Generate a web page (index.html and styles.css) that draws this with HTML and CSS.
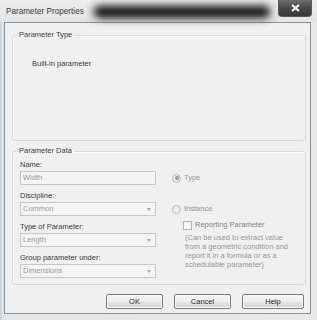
FILE: index.html
```html
<!DOCTYPE html>
<html lang="en">
<head>
    <meta charset="UTF-8">
    <title>Parameter Properties</title>
    <link rel="stylesheet" href="styles.css">
</head>
<body>
    <div class="window">
        <div class="titlebar">
            <span class="title">Parameter Properties</span>
            <div class="redact"></div>
            <div class="close">
                <svg width="9" height="8" viewBox="0 0 9 8"><path d="M1 1 L8 7 M8 1 L1 7" stroke="#fff" stroke-width="2"/></svg>
            </div>
        </div>
        <div class="client">
            <fieldset class="group group-type">
                <legend>Parameter Type</legend>
                <p class="builtin">Built-in parameter</p>
            </fieldset>
            <fieldset class="group group-data">
                <legend>Parameter Data</legend>
                <div class="data-cols">
                    <div class="fields">
                        <label>Name:</label>
                        <div class="field">Width</div>
                        <label>Discipline:</label>
                        <div class="field select">Common</div>
                        <label>Type of Parameter:</label>
                        <div class="field select">Length</div>
                        <label>Group parameter under:</label>
                        <div class="field select">Dimensions</div>
                    </div>
                    <div class="options">
                        <div class="opt-row type-row"><span class="radio checked"></span>Type</div>
                        <div class="opt-row instance-row"><span class="radio"></span>Instance</div>
                        <div class="opt-row check-row"><span class="check"></span>Reporting Parameter</div>
                        <p class="hint">(Can be used to extract value<br>from a geometric condition and<br>report it in a formula or as a<br>schedulable parameter)</p>
                    </div>
                </div>
            </fieldset>
            <div class="buttons">
                <button class="btn">OK</button>
                <button class="btn">Cancel</button>
                <button class="btn btn-help">Help</button>
            </div>
        </div>
    </div>
</body>
</html>
```

FILE: styles.css
```css
body {
    margin: 0;
    background-color: #dfe3e7;
    font-family: "Liberation Sans", Arial, sans-serif;
    font-size: 7.5px;
    color: #3a3a3a;
}
.window {
    width: 317px;
    height: 320px;
    display: flex;
    flex-direction: column;
    background: linear-gradient(to right, #c9d3dc 0, #e4e7ea 4px, #e6e8ea 100%);
}
.titlebar {
    height: 22px;
    flex: none;
    position: relative;
    background: linear-gradient(to bottom, #ececec, #e2e5e8);
}
.title {
    position: absolute;
    left: 6px;
    top: 7px;
    font-size: 8.2px;
    line-height: 10px;
    color: #3a3a3a;
}
.redact {
    position: absolute;
    left: 94px;
    top: 6px;
    width: 176px;
    height: 12px;
    background: #080808;
    filter: blur(4px);
    border-radius: 5px;
}
.close {
    position: absolute;
    left: 278px;
    top: 0;
    width: 34px;
    height: 17px;
    background: linear-gradient(to bottom, #6e6e6e, #464646 55%, #383838);
    border: 1px solid #5a5a5a;
    border-top: none;
    border-radius: 0 0 4px 4px;
    box-sizing: border-box;
    display: flex;
    justify-content: center;
    align-items: center;
}
.client {
    flex: 1;
    margin: 0 6px 6px 4px;
    border: 1px solid #8e8f91;
    background-color: #f0f0f0;
    display: flex;
    flex-direction: column;
}
.group {
    margin: 0 4px 0 7px;
    padding: 0;
    border: 1px solid #d5dadf;
    border-radius: 3px;
    box-shadow: inset 1px 1px 0 #fafafa;
    min-width: 0;
}
.group legend {
    margin-left: 4px;
    padding: 0 2px;
    line-height: 10px;
}
.group-type {
    margin-top: 7px;
}
.builtin {
    margin: 19px 0 71px 19px;
    line-height: 10px;
}
.group-data {
    margin-top: 5px;
}
.data-cols {
    display: flex;
    gap: 16px;
    margin-top: 4px;
    padding: 0 0 6px 7px;
}
.fields {
    width: 136px;
    display: flex;
    flex-direction: column;
}
.fields label {
    line-height: 10px;
    margin-bottom: 1px;
}
.field {
    height: 14px;
    margin-bottom: 6px;
    box-sizing: border-box;
    border: 1px solid #c4c7ca;
    background-color: #f4f4f4;
    color: #9a9a9a;
    padding-left: 2px;
    line-height: 12px;
    position: relative;
}
.field:last-child {
    margin-bottom: 0;
}
.select::after {
    content: "";
    position: absolute;
    right: 4px;
    top: 5px;
    border-left: 2.5px solid transparent;
    border-right: 2.5px solid transparent;
    border-top: 3px solid #a6a6a6;
}
.options {
    flex: 1;
    display: flex;
    flex-direction: column;
    color: #969696;
}
.opt-row {
    display: flex;
    align-items: center;
    line-height: 10px;
}
.type-row {
    margin-top: 13px;
}
.instance-row {
    margin-top: 21px;
}
.check-row {
    margin-top: 6px;
    padding-left: 11px;
    color: #858585;
}
.radio {
    width: 9px;
    height: 9px;
    box-sizing: border-box;
    border-radius: 50%;
    border: 1px solid #b9b9b9;
    background: radial-gradient(circle, #f4f4f4, #e2e2e2);
    margin-right: 3px;
    position: relative;
}
.radio.checked::after {
    content: "";
    position: absolute;
    left: 1.5px;
    top: 1.5px;
    width: 4px;
    height: 4px;
    border-radius: 50%;
    background-color: #9a9a9a;
}
.check {
    width: 9px;
    height: 9px;
    box-sizing: border-box;
    border: 1px solid #b0b0b0;
    background-color: #f6f6f6;
    margin-right: 3px;
}
.hint {
    margin: 3px 0 0 13px;
    line-height: 9px;
}
.buttons {
    display: flex;
    justify-content: flex-end;
    gap: 11px;
    margin-top: 9px;
    padding-right: 6px;
}
.btn {
    width: 57px;
    height: 15px;
    padding: 0;
    font-family: inherit;
    font-size: 7.5px;
    color: #2a2a2a;
    border: 1px solid #7a7a7a;
    border-radius: 2px;
    background: linear-gradient(to bottom, #f4f4f4 0, #eeeeee 50%, #e2e2e2 51%, #d6d6d6 100%);
    box-shadow: inset 0 0 0 1px #fbfbfb;
}
.btn-help {
    width: 62px;
}
```
